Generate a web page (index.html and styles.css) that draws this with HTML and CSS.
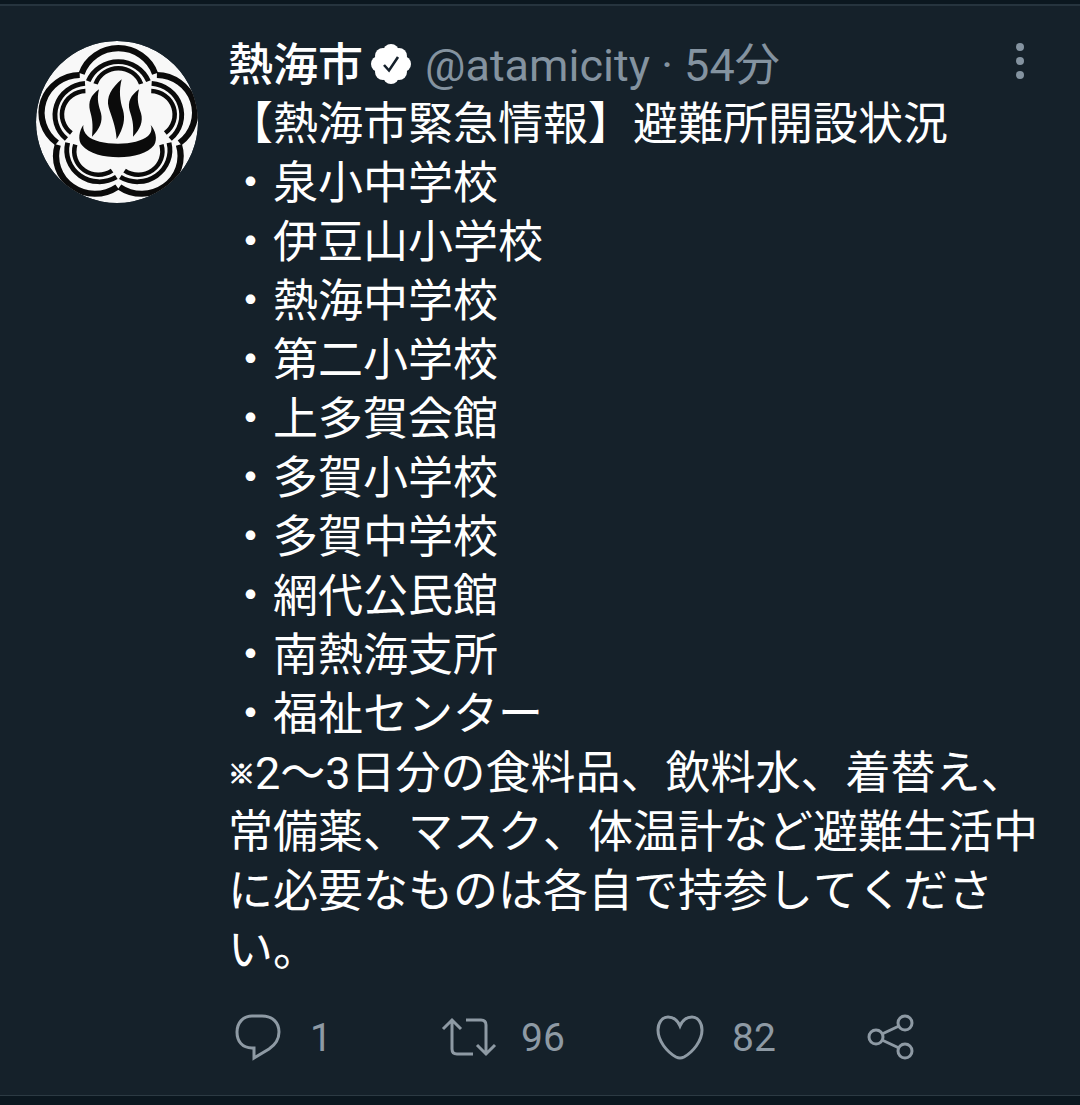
FILE: index.html
```html
<!DOCTYPE html>
<html lang="ja">
<head>
<meta charset="utf-8">
<meta name="viewport" content="width=device-width, initial-scale=1">
<title>熱海市</title>
<link rel="stylesheet" href="styles.css">
</head>
<body>
<article class="tweet">
  <a class="avatar" href="#" aria-label="熱海市">
    <svg viewBox="48 33 486 486" aria-hidden="true">
      <defs>
        <clipPath id="disc"><circle cx="291" cy="276" r="243"/></clipPath>
        <g id="petal" fill="none" stroke="#0b0b0b">
          <path stroke-width="18" d="M190 130A111 111 0 0 1 400 130"/>
          <path stroke-width="14" d="M209 152A93 93 0 0 1 381 152"/>
          <path stroke-width="13" d="M230 160A69 69 0 0 1 360 160"/>
        </g>
      </defs>
      <g clip-path="url(#disc)">
        <circle cx="291" cy="276" r="243" fill="#f8f8f8"/>
        <g transform="translate(295 284) scale(1.05 1.02) translate(-295 -280)">
          <use href="#petal"/>
          <use href="#petal" transform="rotate(72 295 280)"/>
          <use href="#petal" transform="rotate(144 295 280)"/>
          <use href="#petal" transform="rotate(216 295 280)"/>
          <use href="#petal" transform="rotate(288 295 280)"/>
        </g>
      </g>
      <g fill="#0b0b0b">
        <path d="M190 285C178 302 172 330 186 346C208 372 250 382 296 382C342 382 384 370 402 346C414 328 406 300 392 285C397 298 394 308 384 318C366 333 334 341 294 341C254 341 218 333 203 318C193 308 188 298 190 285Z"/>
        <path d="M237 178C212 196 204 216 210 242C216 264 220 280 216 320C239 298 249 274 243 250C237 228 229 210 237 178Z"/>
        <path d="M305 148C274 174 258 202 266 232C273 258 287 284 290 328C312 292 316 266 309 240C300 212 296 184 305 148Z"/>
        <path d="M357 178C332 196 322 216 329 242C336 264 342 280 339 320C361 298 370 274 363 250C356 228 349 210 357 178Z"/>
      </g>
    </svg>
  </a>
  <div class="main">
    <header class="head">
      <a class="name" href="#">熱海市</a>
      <svg class="verified" viewBox="0 0 40 40" role="img" aria-label="認証済み">
        <g fill="#fff">
          <circle cx="20" cy="20" r="17"/>
          <circle cx="20" cy="8" r="8"/><circle cx="28" cy="12" r="8"/>
          <circle cx="32" cy="20" r="8"/><circle cx="28" cy="28" r="8"/>
          <circle cx="20" cy="32" r="8"/><circle cx="12" cy="28" r="8"/>
          <circle cx="8" cy="20" r="8"/><circle cx="12" cy="12" r="8"/>
        </g>
        <path d="M13 21l5 5.500L27 13" fill="none" stroke="#15202b" stroke-width="2.600"/>
      </svg>
      <span class="meta">@atamicity · 54分</span>
      <button class="more" type="button" aria-label="その他">
        <svg viewBox="0 0 10 38" aria-hidden="true"><circle cx="5" cy="5" r="4"/><circle cx="5" cy="19" r="4"/><circle cx="5" cy="33" r="4"/></svg>
      </button>
    </header>
    <p class="text">【熱海市緊急情報】避難所開設状況<br>・泉小中学校<br>・伊豆山小学校<br>・熱海中学校<br>・第二小学校<br>・上多賀会館<br>・多賀小学校<br>・多賀中学校<br>・網代公民館<br>・南熱海支所<br>・福祉センター<br><span class="mark">※</span>2〜3日分の食料品、飲料水、着替え、常備薬、マスク、体温計など避難生活中に必要なものは各自で持参してください。</p>
    <footer class="actions">
      <button type="button" class="action" aria-label="返信 1">
        <svg viewBox="0 0 60 48" aria-hidden="true"><path d="M24 3H34C45 3 51 10 51 19C51 27 47 32 41 36L26 45V35H24C14 35 9 28 9 19C9 10 15 3 24 3Z"/></svg>
        <span>1</span>
      </button>
      <button type="button" class="action" aria-label="リツイート 96">
        <svg viewBox="0 0 60 48" aria-hidden="true"><path d="M4 16L13 7L22 16M13 7V36Q13 41 18 41H34M27 7H42Q47 7 47 12V41M38 32L47 41L56 32"/></svg>
        <span>96</span>
      </button>
      <button type="button" class="action" aria-label="いいね 82">
        <svg viewBox="0 0 60 48" aria-hidden="true"><path d="M30 13C27 6 22 4 18 4C12 4 8 10 8 17C8 28 17 39 26 44Q30 46 34 44C43 39 52 28 52 17C52 10 48 4 42 4C38 4 33 6 30 13Z"/></svg>
        <span>82</span>
      </button>
      <button type="button" class="action" aria-label="共有">
        <svg viewBox="0 0 60 48" aria-hidden="true"><circle cx="15" cy="24" r="7"/><circle cx="44" cy="10" r="7"/><circle cx="44" cy="38" r="7"/><path d="M21 21L38 13M21 27L38 35"/></svg>
      </button>
    </footer>
  </div>
</article>
</body>
</html>
```

FILE: styles.css
```css
* { box-sizing: border-box; }

body {
  margin: 0;
  padding-top: 4px;
  background: #0b171f;
  color: #fff;
  font-family: Roboto, "Noto Sans CJK JP", sans-serif;
  font-size: 45px;
  font-kerning: none;
  line-height: 59px;
}

a { color: inherit; text-decoration: none; }

button {
  padding: 0;
  border: 0;
  background: none;
  color: inherit;
  font: inherit;
  cursor: pointer;
}

svg { display: block; flex: none; }

.tweet {
  display: flex;
  gap: 30px;
  padding: 30px 36px 33px;
  border-top: 2px solid #26343e;
  border-bottom: 1px solid #2c3a43;
  background: #15212a;
}

.avatar {
  flex: none;
  width: 162px;
  padding-top: 5px;
}

.main { flex: 1; min-width: 0; }

.head {
  display: flex;
  align-items: center;
  white-space: nowrap;
}

.name { font-weight: 500; }

.verified { width: 40px; height: 40px; margin: 0 14px 4px 8px; }

.meta { color: #8493a0; }

.more {
  align-self: flex-start;
  width: 48px;
  margin: 6px 0 0 auto;
}

.more svg { width: 10px; height: 38px; margin: 0 auto; fill: #8493a0; }

.text { margin: 0; }

.mark {
  font-size: 27px;
  line-height: 1;
  vertical-align: 5px;
  -webkit-text-stroke: 1px currentColor;
}

.actions {
  display: grid;
  grid-template-columns: repeat(3, 211fr) 183fr;
  align-items: center;
  margin-top: 31px;
  color: #8e9aa4;
  font-size: 39px;
  line-height: 48px;
}

.action { display: flex; align-items: center; gap: 22px; }

.action span { padding-top: 3px; }

.action svg {
  width: 60px;
  height: 48px;
  fill: none;
  stroke: currentColor;
  stroke-width: 3px;
}
```
